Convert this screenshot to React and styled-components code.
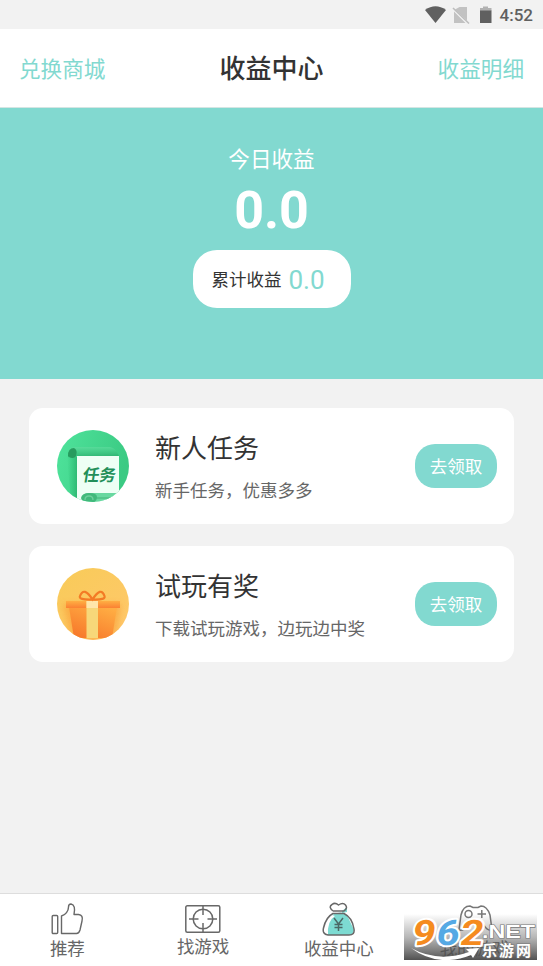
import styled, { createGlobalStyle } from "styled-components";

const COLORS = {
    PRIMARY: '#82d9d0',
    PAGE: '#f2f2f2',
    TEXT: '#333333',
    MUTED: '#666666',
    ICON: '#686868',
}

const GlobalStyle = createGlobalStyle`
    * { box-sizing: border-box; }
    body {
        margin: 0;
        background: ${COLORS.PAGE};
        font-family: Roboto, "Noto Sans CJK SC", sans-serif;
        color: ${COLORS.TEXT};
    }
    svg { display: block; flex-shrink: 0; }
`

const Screen = styled.div`
    position: relative;
    display: flex;
    flex-direction: column;
    width: 543px;
    height: 966px;
    overflow: hidden;
    white-space: nowrap;
`

const StatusBar = styled.div`
    display: flex;
    align-items: center;
    justify-content: flex-end;
    height: 29px;
    padding-right: 10px;
`

const Clock = styled.span`
    margin-left: 6px;
    font-size: 17px;
    font-weight: 500;
    line-height: 20px;
    color: #606060;
`

const Header = styled.header`
    display: grid;
    grid-template-columns: 1fr auto 1fr;
    align-items: center;
    height: 79px;
    padding: 2px 19px 0;
    background: white;
    border-bottom: 1px solid #d5e5e3;
`

const HeaderLink = styled.span`
    justify-self: ${(props) => props.$side};
    font-size: 21.6px;
    line-height: 32px;
    padding-top: 1px;
    color: ${COLORS.PRIMARY};
`

const Title = styled.h1`
    margin: 0;
    font-size: 26px;
    font-weight: 500;
    line-height: 38px;
`

const Summary = styled.section`
    display: flex;
    flex-direction: column;
    align-items: center;
    height: 271px;
    padding-top: 36px;
    background: ${COLORS.PRIMARY};
    color: white;
`

const SummaryLabel = styled.div`
    font-size: 21.6px;
    line-height: 32px;
`

const Today = styled.div`
    font-size: 52px;
    font-weight: 700;
    line-height: 60px;
    margin-top: 5px;
`

const Total = styled.div`
    display: flex;
    align-items: center;
    justify-content: center;
    gap: 7px;
    width: 158px;
    height: 58px;
    margin-top: 9px;
    padding: 0 7px 2px 0;
    border-radius: 24px;
    background: white;
    color: ${COLORS.TEXT};
    font-size: 17.5px;
`

const TotalValue = styled.span`
    padding-top: 4px;
    font-size: 26px;
    color: ${COLORS.PRIMARY};
`

const Tasks = styled.main`
    display: flex;
    flex: 1;
    flex-direction: column;
    gap: 22px;
    padding: 29px 29px 0;
`

const Card = styled.div`
    display: flex;
    align-items: center;
    height: 116px;
    padding: 0 17px 0 28px;
    border-radius: 14px;
    background: white;
`

const CardBody = styled.div`
    flex: 1;
    margin-left: 26px;
    padding-top: 1px;
`

const CardTitle = styled.div`
    font-size: 26px;
    line-height: 38px;
`

const CardText = styled.div`
    margin-top: 10px;
    font-size: 17.5px;
    line-height: 26px;
    color: ${COLORS.MUTED};
`

const Button = styled.button`
    width: 82px;
    height: 44px;
    padding: 0 0 2px;
    border: 0;
    border-radius: 20px;
    background: ${COLORS.PRIMARY};
    color: white;
    font: inherit;
    font-size: 17.5px;
`

const TabBar = styled.nav`
    display: grid;
    grid-template-columns: repeat(4, 1fr);
    height: 73px;
    border-top: 1px solid #dddddd;
    background: white;
`

const Tab = styled.div`
    display: flex;
    flex-direction: column;
    align-items: center;
    padding: 8px 1px 0 0;
    color: ${COLORS.MUTED};
    font-size: 17.5px;
    line-height: 26px;
`

const TabLabel = styled.span`
    margin-top: ${(props) => props.$raise ? '-2px' : '0'};
`

const Watermark = styled.div`
    position: absolute;
    left: 404px;
    top: 914px;
`

const StatusIcons = () => (
    <svg width="70" height="20" viewBox="0 0 70 20">
        <path d="M1 5Q11.500-2.500 22 5L11.500 18Z" fill="#606060" />
        <path d="M35.500 2H43V15.500L31 4.500ZM30 6.500L41.500 18H30Z" fill="#c2c2c2" />
        <path d="M29 3L45 18.500" stroke="#bdbdbd" strokeWidth="1.600" />
        <path d="M59 1.500H64V3H67.500V6H56V3H59Z" fill="#b2b2b2" />
        <path d="M56 5.500H67.500V18H56Z" fill="#606060" />
    </svg>
)

const TaskIcon = () => (
    <svg width="72" height="72" viewBox="0 0 72 72">
        <defs>
            <linearGradient id="green" x1="0" x2="1" y2=".3">
                <stop stopColor="#4fe49c" />
                <stop offset="1" stopColor="#3bca83" />
            </linearGradient>
            <linearGradient id="roll" x2=".15" y2="1">
                <stop stopColor="#5bdd9d" />
                <stop offset=".5" stopColor="#43cc88" />
                <stop offset="1" stopColor="#2fb472" />
            </linearGradient>
            <linearGradient id="shade" x2="1">
                <stop stopColor="#24b76d" stopOpacity="0" />
                <stop offset="1" stopColor="#1ea660" stopOpacity=".6" />
            </linearGradient>
            <clipPath id="taskClip"><circle cx="36" cy="36" r="36" /></clipPath>
        </defs>
        <g clipPath="url(#taskClip)">
            <rect width="72" height="72" fill="url(#green)" />
            <path d="M10 27H20V72H14Z" fill="url(#shade)" />
            <path d="M11 27V23Q12 17 18 17H53Q59 18 62 26H20Q19 27 15 28Z" fill="url(#roll)" />
            <path d="M11 26Q11 18 17 18Q21 20 19 26Q16 30 11 26Z" fill="#279b5e" />
            <path d="M20 26H62V72H20Z" fill="#eefff5" />
            <path d="M26 72V67Q27 63 33 63H66V72Z" fill="#68d8a0" />
            <path d="M38 68H66" stroke="#55c68c" strokeWidth="2" />
            <path d="M24 68Q25 63 32 63Q40 63 40 67Q40 71 36 73H26Z" fill="#41b97b" />
            <path d="M28 70Q28 66 32 66Q36 66 36 70" fill="none" stroke="#6ccf9b" strokeWidth="1.300" />
            <text x="25" y="51" transform="translate(8 0) skewX(-9)" fontFamily="Noto Sans CJK SC, sans-serif" fontSize="16.500" fontWeight="700" fill="#228f59">任务</text>
        </g>
    </svg>
)

const GiftIcon = () => (
    <svg width="72" height="72" viewBox="0 0 72 72">
        <defs>
            <linearGradient id="gold" x2=".8" y2="1">
                <stop stopColor="#f8cb58" />
                <stop offset="1" stopColor="#ffc86b" />
            </linearGradient>
            <linearGradient id="box" x1=".8" x2=".2" y2="1">
                <stop stopColor="#ffad43" />
                <stop offset="1" stopColor="#f7782b" />
            </linearGradient>
            <linearGradient id="lid" x2="0" y2="1">
                <stop stopColor="#ffae43" />
                <stop offset="1" stopColor="#fb8133" />
            </linearGradient>
            <filter id="soft" x="-.3" y="-.3" width="1.600" height="1.600">
                <feGaussianBlur stdDeviation="3" />
            </filter>
            <clipPath id="giftClip"><circle cx="36" cy="36" r="36" /></clipPath>
        </defs>
        <g clipPath="url(#giftClip)">
            <rect width="72" height="72" fill="url(#gold)" />
            <path d="M6 36H64L58 72H15Z" fill="#f99b36" opacity=".6" filter="url(#soft)" />
            <path d="M12 39H60L55 70H17Z" fill="url(#box)" />
            <path d="M9 33H63V40H9Z" fill="url(#lid)" />
            <path d="M29.500 33H41V70H29.500Z" fill="#f7d779" />
            <path d="M29.500 33H41V40H29.500Z" fill="#ffe6aa" />
            <path d="M35.500 31.500Q21 32 23 28Q27 18 35.500 31.500Q44 18 47.500 28Q49 32 35.500 31.500Z" fill="none" stroke="#f37b25" strokeWidth="2.200" />
        </g>
    </svg>
)

const ThumbIcon = () => (
    <svg width="34" height="34" viewBox="0 0 34 34" fill="none" stroke={COLORS.ICON} strokeWidth="1.400" strokeLinejoin="round">
        <rect x="2.200" y="13.500" width="5.500" height="18" rx="1" />
        <path d="M11.500 31.500V14C15.500 13 18.500 9 18.500 5Q18.500 2 21 2Q26 3 24 12.500H28.500Q33.500 13 32 19L30 28Q29 31.500 26.500 31.500Z" />
    </svg>
)

const TargetIcon = () => (
    <svg width="36" height="34" viewBox="0 0 36 34" fill="none" stroke={COLORS.ICON} strokeWidth="1.500">
        <rect x=".8" y="3.800" width="34" height="26.500" rx="1.500" />
        <circle cx="18" cy="17" r="9.800" />
        <path d="M18 4V13M18 21V30M4 17H13.500M22.500 17H32" />
    </svg>
)

const BagIcon = () => (
    <svg width="34" height="34" viewBox="0 0 34 34" fill="none" stroke={COLORS.ICON} strokeWidth="1.500">
        <path d="M10 13Q19 8 25 13L32 28Q31 33 27 33H6Q5 19 13 14Z" fill="#7ddbd2" stroke="none" />
        <path d="M20 9L25 5V10L20 11Z" fill="#7ddbd2" stroke="none" />
        <path d="M11 9Q6 5 10 2.500Q13 0 16.500 3Q21 0 23.500 3Q26 6 22 9M11 9H22M11 11.500H22C27 14 31 20 32 27Q33 33 27 33H6Q0 32 1.500 26Q4 15 11 11.500Z" />
        <path d="M12 16L16.500 22L21 16M12.500 22.500H20.500M12.500 25.500H20.500M16.500 22V29" stroke="#4b6966" />
    </svg>
)

const GamepadIcon = () => (
    <svg width="38" height="34" viewBox="0 0 38 34" fill="none" stroke="#777" strokeWidth="1.500">
        <path d="M5 13Q7 4 14 4L17 5.500H22L25 4Q31 4 34 13L36 28Q31 29 28 23H12Q8 29 3 28Z" />
        <circle cx="12.500" cy="12" r="3.500" />
        <path d="M21.500 12H30M25.800 8V16" />
    </svg>
)

const SiteMark = () => (
    <svg width="134" height="46" viewBox="0 0 134 46">
        <defs>
            <linearGradient id="fade" x2="0" y2="1">
                <stop stopColor="#555" stopOpacity="0" />
                <stop offset=".5" stopColor="#606060" stopOpacity=".45" />
                <stop offset="1" stopColor="#484848" stopOpacity=".95" />
            </linearGradient>
        </defs>
        <rect width="133" height="46" fill="url(#fade)" />
        <g transform="translate(5 0) skewX(-9)" fontFamily="Roboto, sans-serif" fontWeight="700" fontSize="35" strokeLinejoin="round">
            <g fill="white" stroke="white" strokeWidth="4" aria-hidden="true">
                <text x="7" y="31" textLength="23" lengthAdjust="spacingAndGlyphs" fill="#f58b1f" paintOrder="stroke">9</text>
                <text x="31" y="31" textLength="23" lengthAdjust="spacingAndGlyphs" fill="#55a9e4" paintOrder="stroke">6</text>
                <text x="55" y="31" textLength="23" lengthAdjust="spacingAndGlyphs" fill="#f58b1f" paintOrder="stroke">2</text>
            </g>
        </g>
        <path d="M7 34Q34 49 65 38L62 35L75 34L69 44L67 41Q34 54 7 34Z" fill="white" />
        <g fill="white" stroke="#777" strokeWidth="1.200" paintOrder="stroke">
            <text x="78" y="24" fontFamily="Liberation Sans, Arial, sans-serif" fontWeight="700" fontSize="19" textLength="53" lengthAdjust="spacingAndGlyphs">.NET</text>
            <text x="78" y="42" fontFamily="Noto Sans CJK SC, sans-serif" fontWeight="700" fontSize="15" textLength="49">乐游网</text>
        </g>
    </svg>
)

const tasks = [
    { icon: TaskIcon, title: '新人任务', text: '新手任务，优惠多多' },
    { icon: GiftIcon, title: '试玩有奖', text: '下载试玩游戏，边玩边中奖' },
]

const tabs = [
    { icon: ThumbIcon, label: '推荐' },
    { icon: TargetIcon, label: '找游戏', raise: true },
    { icon: BagIcon, label: '收益中心' },
    { icon: GamepadIcon, label: '我的游戏' },
]

const App = () => {
    return (
        <>
            <GlobalStyle />
            <Screen>
                <StatusBar>
                    <StatusIcons />
                    <Clock>4:52</Clock>
                </StatusBar>
                <Header>
                    <HeaderLink $side="start">兑换商城</HeaderLink>
                    <Title>收益中心</Title>
                    <HeaderLink $side="end">收益明细</HeaderLink>
                </Header>
                <Summary>
                    <SummaryLabel>今日收益</SummaryLabel>
                    <Today>0.0</Today>
                    <Total>
                        累计收益
                        <TotalValue>0.0</TotalValue>
                    </Total>
                </Summary>
                <Tasks>
                    {tasks.map(({ icon: Icon, title, text }) => (
                        <Card key={title}>
                            <Icon />
                            <CardBody>
                                <CardTitle>{title}</CardTitle>
                                <CardText>{text}</CardText>
                            </CardBody>
                            <Button>去领取</Button>
                        </Card>
                    ))}
                </Tasks>
                <TabBar>
                    {tabs.map(({ icon: Icon, label, raise }) => (
                        <Tab key={label}>
                            <Icon />
                            <TabLabel $raise={raise}>{label}</TabLabel>
                        </Tab>
                    ))}
                </TabBar>
                <Watermark>
                    <SiteMark />
                </Watermark>
            </Screen>
        </>
    )
}

export default App
